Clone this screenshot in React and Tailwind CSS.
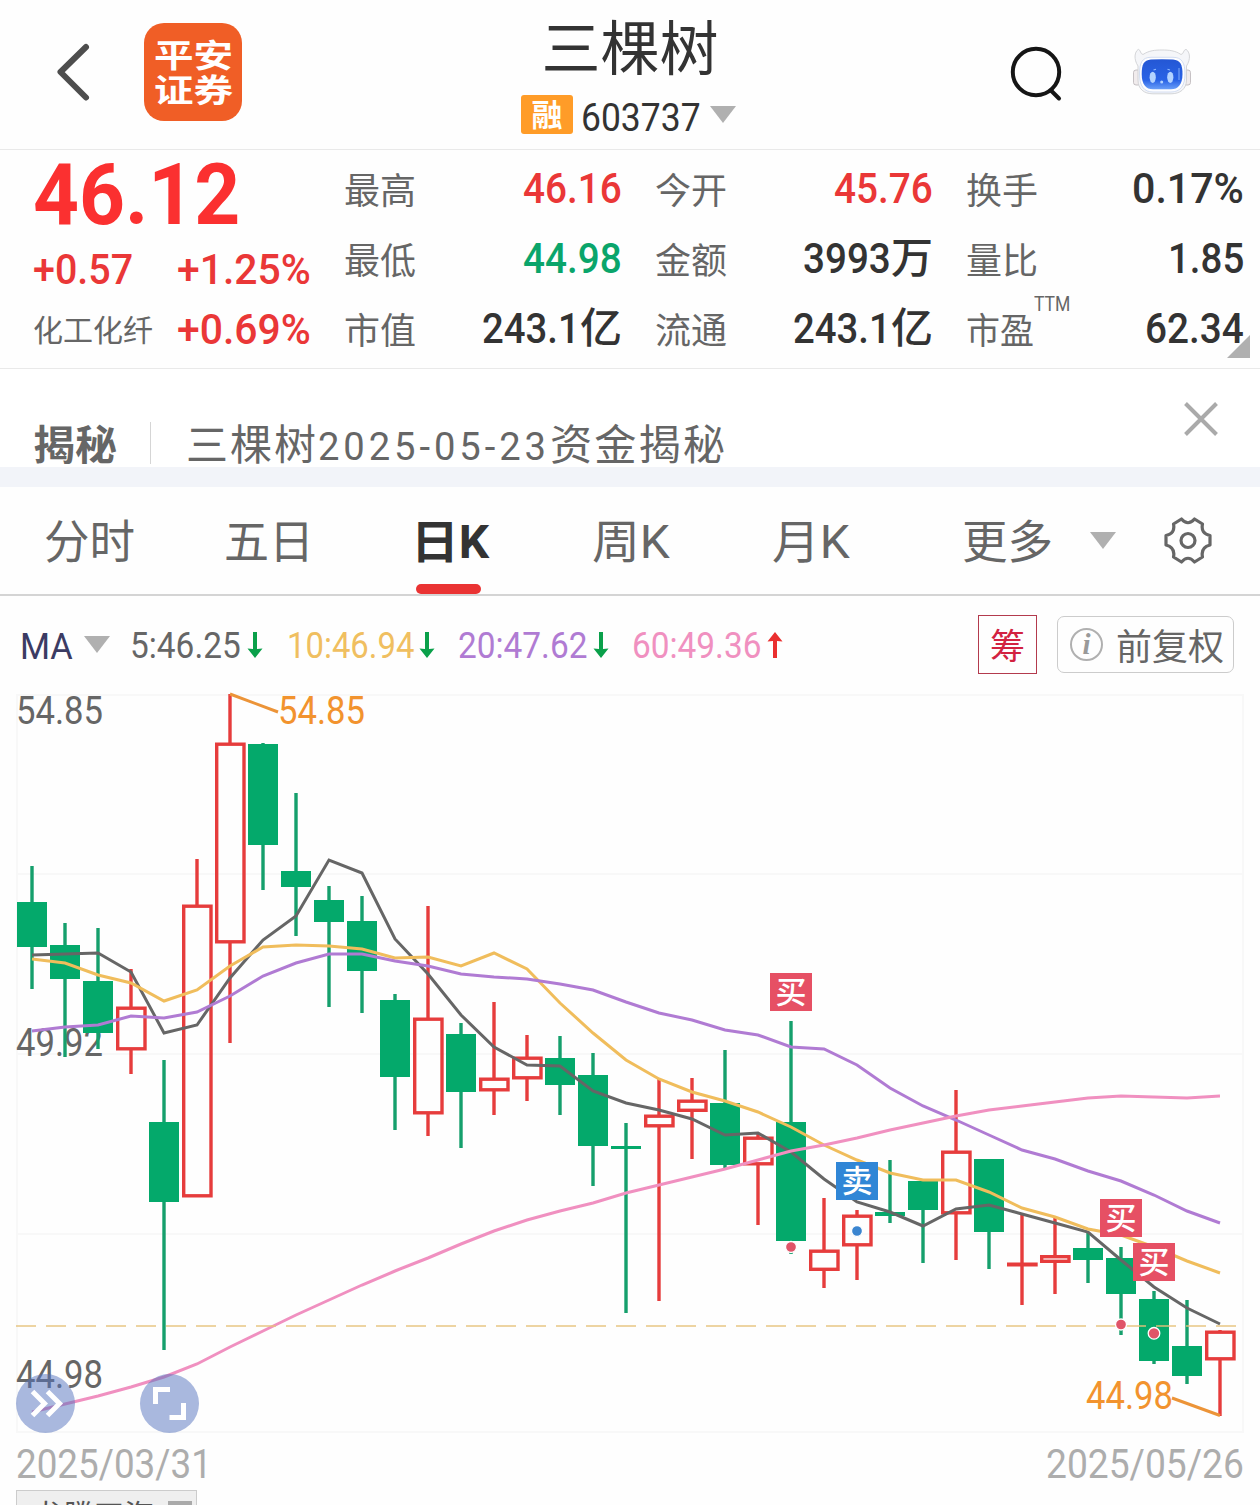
import { useLayoutEffect, useRef, useState } from "react";

const quotes = [
  [
    { label: "最高", value: "46.16", w: 99, color: "text-[#ea3737]" },
    { label: "最低", value: "44.98", w: 99, color: "text-[#0aa56b]" },
    { label: "市值", value: "243.1", unit: "亿", w: 98, color: "text-[#333]" },
  ],
  [
    { label: "今开", value: "45.76", w: 99, color: "text-[#ea3737]" },
    { label: "金额", value: "3993", unit: "万", w: 88, color: "text-[#333]" },
    { label: "流通", value: "243.1", unit: "亿", w: 98, color: "text-[#333]" },
  ],
  [
    { label: "换手", value: "0.17%", w: 112, color: "text-[#333]" },
    { label: "量比", value: "1.85", w: 76, color: "text-[#333]" },
    { label: "市盈", sup: "TTM", value: "62.34", w: 99, color: "text-[#333]" },
  ],
];

// [type, high, body top, body bottom, low]
const candles = [
  ["d", 866, 902, 947, 989],
  ["d", 923, 945, 979, 1057],
  ["d", 928, 981, 1033, 1049],
  ["u", 969, 1006.5, 1050.5, 1074],
  ["d", 1060, 1122, 1202, 1350],
  ["u", 859, 904.5, 1197.5, 1197],
  ["u", 694, 742.5, 943.5, 1043],
  ["d", 743, 744, 845, 890],
  ["d", 793, 871, 887, 936],
  ["d", 886, 900, 922, 1007],
  ["d", 896, 921, 971, 1013],
  ["d", 994, 1000, 1077, 1130],
  ["u", 906, 1017.5, 1114.5, 1136],
  ["d", 1023, 1034, 1092, 1148],
  ["u", 1002, 1077.5, 1091.5, 1115],
  ["u", 1035, 1056.5, 1079.5, 1101],
  ["d", 1036, 1058, 1085, 1115],
  ["d", 1053, 1075, 1146, 1186],
  ["d", 1123, 1146, 1149, 1313],
  ["u", 1079, 1114.5, 1127.5, 1301],
  ["u", 1078, 1099.5, 1112, 1159],
  ["d", 1050, 1103, 1165, 1169],
  ["u", 1134, 1136.5, 1165.5, 1225],
  ["d", 1021, 1122, 1241, 1254],
  ["u", 1198, 1249.5, 1271, 1288],
  ["u", 1210, 1214.5, 1246.5, 1280],
  ["d", 1160, 1212, 1216, 1223],
  ["d", 1181, 1181, 1210, 1263],
  ["u", 1090, 1150.5, 1214.5, 1260],
  ["d", 1159, 1159, 1232, 1269],
  ["u", 1214, 1262.5, 1266.5, 1305],
  ["u", 1218, 1255, 1263, 1294],
  ["d", 1233, 1248, 1260, 1283],
  ["d", 1247, 1258, 1294, 1335],
  ["d", 1291, 1299, 1361, 1364],
  ["d", 1300, 1346, 1376, 1384],
  ["u", 1330, 1330.5, 1360.5, 1416],
];

const ma5 = [955, 954, 953, 972, 1033, 1025, 978, 940, 916, 860, 873, 939, 974, 1015, 1047, 1065, 1066, 1091, 1103, 1110, 1119, 1135, 1133, 1152, 1179, 1202, 1212, 1226, 1209, 1205, 1214, 1223, 1232, 1260, 1287, 1308, 1324];
const ma10 = [959, 963, 975, 983, 1001, 990, 966, 947, 945, 946, 949, 958, 957, 966, 953, 969, 1003, 1033, 1060, 1079, 1092, 1101, 1112, 1127, 1145, 1160, 1173, 1180, 1180, 1192, 1208, 1217, 1229, 1235, 1247, 1261, 1273];
const ma20 = [1031, 1027, 1025, 1016, 1018, 1012, 996, 976, 963, 954, 954, 961, 966, 974, 977, 979, 984, 990, 1002, 1013, 1020, 1030, 1035, 1047, 1049, 1065, 1088, 1106, 1120, 1135, 1150, 1159, 1171, 1181, 1195, 1211, 1223];
const ma60 = [1412, 1404, 1396, 1387, 1377, 1364, 1347, 1331, 1315, 1300, 1285, 1271, 1258, 1244, 1231, 1220, 1211, 1203, 1193, 1185, 1177, 1169, 1160, 1151, 1145, 1138, 1130, 1123, 1116, 1110, 1106, 1102, 1098, 1096, 1097, 1098, 1096];

const cx = (i) => 32 + i * 33;
const toPoints = (ys) => ys.map((y, i) => `${cx(i)},${y}`).join(" ");

// Squeezes a run of text horizontally so that it takes exactly `w` pixels
function Fit({ w, className = "", children }) {
  const ref = useRef(null);
  const [scale, setScale] = useState(1);

  useLayoutEffect(() => {
    setScale(w / ref.current.offsetWidth);
  }, [w, children]);

  return (
    <span className={`inline-block shrink-0 whitespace-nowrap ${className}`} style={{ width: w }}>
      <span ref={ref} className="inline-block origin-left" style={{ transform: `scaleX(${scale})` }}>
        {children}
      </span>
    </span>
  );
}

function Caret({ className = "" }) {
  return (
    <svg width="26" height="17" viewBox="0 0 26 17" className={`shrink-0 ${className}`}>
      <path d="M0 0H26L13 17Z" fill="#b0b0b0" />
    </svg>
  );
}

function Arrow({ up }) {
  return (
    <svg width="16" height="28" viewBox="0 0 16 28" className={`shrink-0 ${up ? "rotate-180" : ""}`}>
      <path d="M6 1H10V18L15.500 17.500L8 27L0.500 17.500L6 18Z" fill={up ? "#ea2f2f" : "#0aa04a"} />
    </svg>
  );
}

function Header() {
  return (
    <header className="flex h-[150px] shrink-0 border-b border-[#e9e9e9]">
      <div className="flex w-[521px] shrink-0 pl-[54px] pt-[23px]">
        <svg width="38" height="98" viewBox="0 0 38 98" fill="none" stroke="#4d4d4d" strokeWidth="6" strokeLinecap="round" strokeLinejoin="round">
          <path d="M32 24L6.500 49L32 74.500" />
        </svg>
        <div className="ml-[52px] flex size-[98px] flex-col items-center justify-center rounded-[20px] bg-[#f05e26] pt-[3px] text-[32px] font-bold leading-[35px] text-white">
          <Fit w={79} className="h-[35px]">平安</Fit>
          <Fit w={79} className="h-[35px]">证券</Fit>
        </div>
      </div>
      <div className="flex w-[218px] shrink-0 flex-col items-center">
        <h1 className="mt-[12px] h-[74px] text-[59px] leading-[76px] text-[#333]">三棵树</h1>
        <div className="mt-[9px] flex h-[39px] w-full">
          <span className="h-[39px] w-[52px] rounded-[3px] bg-[#ff9c28] text-center text-[31px] font-bold leading-[41px] text-white">融</span>
          <Fit w={120} className="ml-2 text-[39px] leading-[46px] text-[#333]">603737</Fit>
          <Caret className="ml-[9px] mt-[11px]" />
        </div>
      </div>
      <div className="flex pl-[269px] pt-[44px]">
        <svg width="58" height="60" viewBox="0 0 58 60" fill="none" stroke="#151515" strokeWidth="4" strokeLinecap="round">
          <circle cx="28" cy="28" r="23.200" />
          <path d="M43.500 47L51 54.500" />
        </svg>
        <svg width="60" height="52" viewBox="0 0 60 52" className="ml-[67px]">
          <defs>
            <linearGradient id="face" x1="0" y1="0" x2="0" y2="1">
              <stop offset="0" stopColor="#2457d4" />
              <stop offset="0.700" stopColor="#2a63e6" />
              <stop offset="1" stopColor="#6b9ff8" />
            </linearGradient>
          </defs>
          <rect x="0.500" y="26" width="7" height="15" rx="2.500" fill="#f1eced" stroke="#b9b4b8" strokeWidth="0.800" />
          <rect x="50.500" y="26" width="7" height="15" rx="2.500" fill="#f1eced" stroke="#b9b4b8" strokeWidth="0.800" />
          <path d="M5.300 5.300C8 6 7 10 10 10.500C16 6.500 22 6 29 6C36 6 42 6.500 48 10.500C51 10 50 6 53 5.300C57 8 58 15 53.500 22V36C53.500 45 47 49.800 38 49.800H20C11 49.800 5 45 5 36V22C0.500 15 1.500 8 5.300 5.300Z" fill="#f5f6f9" stroke="#cfd0d4" strokeWidth="0.900" />
          <path d="M18 13.300H40C49 13.300 52 19 52 30C52 42 47 48 38 48H20C11 48 6.500 42 6.500 30C6.500 19 9 13.300 18 13.300Z" fill="#fdfdff" stroke="#c9d5ee" strokeWidth="0.800" />
          <path d="M18 15.500Q29 14.800 40 15.500C47.500 16 49.500 21 49.500 30C49.500 40.500 45 45.300 38 45.300H20C13 45.300 8.700 40.500 8.700 30C8.700 21 10.500 16 18 15.500Z" fill="url(#face)" />
          <ellipse cx="19.700" cy="33.300" rx="3.100" ry="5.600" fill="#b4d3ff" />
          <ellipse cx="37.300" cy="33.300" rx="3.100" ry="5.600" fill="#b4d3ff" />
          <path d="M20.500 26L23 25.200M34.500 25.200L37 26" stroke="#8db8ff" strokeWidth="1.200" />
          <circle cx="28.700" cy="38" r="1.500" fill="#b4d3ff" />
          <path d="M46 24V36" stroke="#83adf8" strokeWidth="1" />
        </svg>
      </div>
    </header>
  );
}

function Quote() {
  return (
    <section className="relative flex h-[219px] shrink-0 border-b border-[#e9e9e9]">
      <div className="w-[344px] shrink-0 pl-[33px] text-[43px] font-medium text-[#ea3737]">
        <div className="h-[84px] text-[86px] font-bold leading-[90px] text-[#fb3030]">
          <Fit w={207}>46.12</Fit>
        </div>
        <div className="flex h-[60px] leading-[70px]">
          <Fit w={100}>+0.57</Fit>
          <Fit w={134} className="ml-[44px]">+1.25%</Fit>
        </div>
        <div className="flex h-[60px] leading-[70px]">
          <Fit w={120} className="text-[30px] font-normal leading-[74px] text-[#666]">化工化纤</Fit>
          <Fit w={134} className="ml-[24px]">+0.69%</Fit>
        </div>
      </div>
      <div className="flex shrink-0 gap-[33px] pt-1">
        {quotes.map((col, i) => (
          <div key={i} className="w-[278px]">
            {col.map((q) => (
              <div key={q.label} className="flex h-[70px] justify-between leading-[69px]">
                <span className="flex text-[36px] leading-[77px] text-[#666]">
                  <Fit w={q.sup ? 68 : 72}>{q.label}</Fit>
                  {q.sup && <Fit w={36} className="text-[20px] leading-[21px]">{q.sup}</Fit>}
                </span>
                <span className={`flex text-[43px] font-medium ${q.color}`}>
                  <Fit w={q.w}>{q.value}</Fit>
                  {q.unit && <span className="text-[42px]">{q.unit}</span>}
                </span>
              </div>
            ))}
          </div>
        ))}
      </div>
      <svg width="23" height="23" viewBox="0 0 23 23" className="absolute bottom-[10px] right-[10px]">
        <path d="M23 0V23H0Z" fill="#b0b0b0" />
      </svg>
    </section>
  );
}

function Banner() {
  return (
    <section className="flex h-[98px] shrink-0 bg-white text-[#666]">
      <div className="flex h-[98px] w-[1184px] pl-[33px] pt-[57px] leading-[40px]">
        <Fit w={84} className="text-[41px] font-bold">揭秘</Fit>
        <div className="-mt-[4px] ml-[33px] h-[42px] w-px bg-[#d5d5d5]" />
        <span className="ml-[35px] flex">
          <Fit w={132} className="text-[42px] tracking-[2px]">三棵树</Fit>
          <Fit w={232} className="mt-px text-[39px] tracking-[4px]">2025-05-23</Fit>
          <Fit w={177} className="text-[42px] tracking-[2px]">资金揭秘</Fit>
        </span>
      </div>
      <svg width="34" height="34" viewBox="0 0 34 34" className="mt-[33px]" stroke="#aaa" strokeWidth="4">
        <path d="M1.500 1.500L32.500 32.500M32.500 1.500L1.500 32.500" />
      </svg>
    </section>
  );
}

function Tabs() {
  return (
    <nav className="flex h-[109px] shrink-0 border-b-2 border-[#d4d4d4] pl-[44px] text-[46px] leading-[110px] text-[#666]">
      <Fit w={91} className="mr-[89px]">分时</Fit>
      <Fit w={90} className="mr-[97px]">五日</Fit>
      <div className="relative mr-[103px] h-[107px] w-[78px] font-bold text-[#333]">
        <Fit w={78}>日K</Fit>
        <div className="absolute bottom-0 left-[5px] h-[10px] w-[65px] rounded-full bg-[#ea3333]" />
      </div>
      <Fit w={78} className="mr-[102px]">周K</Fit>
      <Fit w={78} className="mr-[112px]">月K</Fit>
      <Fit w={91}>更多</Fit>
      <Caret className="ml-[37px] mt-[45px]" />
      <svg width="48" height="48" viewBox="0 0 48 48" className="ml-[48px] mt-[29px]" fill="none" stroke="#666" strokeWidth="3.200" strokeLinejoin="round">
        <path d="M17.500 3Q24 10.500 30.500 3L38.500 8Q36.500 17.500 46 19.500V29Q36.500 31.500 38.500 41L30.500 46Q24 38.500 17.500 46L9.500 41Q11.500 31.500 2 29V19.500Q11.500 17.500 9.500 8Z" />
        <circle cx="24" cy="24.500" r="7" />
      </svg>
    </nav>
  );
}

function Indicators() {
  return (
    <div className="flex h-[98px] shrink-0 pl-[20px] text-[37px] leading-[101px]">
      <Fit w={53} className="text-[#3b3b63]">MA</Fit>
      <Caret className="ml-[11px] mt-[40px]" />
      <div className="ml-[20px] flex items-center text-[#666]">
        <Fit w={111}>5:46.25</Fit>
        <span className="ml-[6px]"><Arrow /></span>
      </div>
      <div className="ml-[24px] flex items-center text-[#f0bf60]">
        <Fit w={127}>10:46.94</Fit>
        <span className="ml-[5px]"><Arrow /></span>
      </div>
      <div className="ml-[23px] flex items-center text-[#b07bd3]">
        <Fit w={129}>20:47.62</Fit>
        <span className="ml-[6px]"><Arrow /></span>
      </div>
      <div className="ml-[23px] flex items-center text-[#f090c0]">
        <Fit w={129}>60:49.36</Fit>
        <span className="ml-[6px]"><Arrow up /></span>
      </div>
      <div className="ml-auto mr-[26px] mt-[19px] flex gap-5">
        <div className="size-[59px] border border-[#b33a4d] text-center text-[35px] leading-[64px] text-[#d22240]">筹</div>
        <div className="mt-px flex h-[57px] w-[177px] items-center rounded-[7px] border border-[#ccc] pl-[12px] text-[36px] leading-[55px] text-[#666]">
          <span className="flex size-[33px] items-center justify-center rounded-full border-2 border-[#b0b0b0] font-['Liberation_Serif',serif] text-[29px] font-bold italic leading-none text-[#999]">i</span>
          <Fit w={108} className="ml-[13px] mt-[8px]">前复权</Fit>
        </div>
      </div>
    </div>
  );
}

function Badge({ x, y, sell }) {
  return (
    <g>
      <rect x={x} y={y} width="42" height="38" fill={sell ? "#3086d6" : "#e65064"} />
      <text x={x + 21} y={y + 30} fontSize="31" fontWeight="500" fill="#fff" textAnchor="middle">
        {sell ? "卖" : "买"}
      </text>
    </g>
  );
}

function Chart() {
  return (
    <svg width="1260" height="740" viewBox="0 694 1260 740" className="block shrink-0 overflow-visible">
      {/* grid */}
      <g stroke="#f8f8f8" strokeWidth="2">
        <path d="M16 695H1244M16 874H1244M16 1054H1244M16 1234H1244M16 1432H1244M17 694V1433M1243 694V1433" />
      </g>

      {/* price scale */}
      <g fontSize="38" fill="#666">
        <text x="16" y="723.500" textLength="87" lengthAdjust="spacingAndGlyphs">54.85</text>
        <text x="16" y="1055.500" textLength="87" lengthAdjust="spacingAndGlyphs">49.92</text>
        <text x="16" y="1387.500" textLength="87" lengthAdjust="spacingAndGlyphs">44.98</text>
      </g>

      {candles.map(([type, high, top, bottom, low], i) =>
        type === "d" ? (
          <g key={i} fill="#04a96b">
            <rect x={cx(i) - 1.7} y={high} width="3.400" height={low - high} fill="#159f6c" />
            <rect x={cx(i) - 15} y={top} width="30" height={bottom - top} />
          </g>
        ) : (
          <g key={i} stroke="#e63c3c" strokeWidth="3.400" fill="none">
            <path d={`M${cx(i)} ${high}V${top + 1}M${cx(i)} ${bottom - 1}V${Math.max(low, bottom - 1)}`} />
            <rect x={cx(i) - 13.300} y={top + 1.7} width="27.300" height={Math.max(bottom - top - 3.4, 0.5)} />
          </g>
        )
      )}

      {/* moving averages */}
      <g fill="none" strokeWidth="3">
        <polyline points={toPoints(ma5)} stroke="#666" />
        <polyline points={toPoints(ma10)} stroke="#f0bd5c" />
        <polyline points={toPoints(ma20)} stroke="#b07bd3" />
        <polyline points={toPoints(ma60)} stroke="#f090c0" />
      </g>
      <path d="M16 1326H1237" stroke="#e6c27a" strokeOpacity="0.700" strokeWidth="2" strokeDasharray="20 10" />

      {/* extremes */}
      <g fontSize="38" fill="#f2932e">
        <path d="M230 694L278 712M1172 1398L1220 1415.500" stroke="#ec9438" strokeWidth="3" />
        <text x="278" y="723.500" textLength="87" lengthAdjust="spacingAndGlyphs">54.85</text>
        <text x="1086" y="1408.500" textLength="87" lengthAdjust="spacingAndGlyphs">44.98</text>
      </g>

      {/* trades */}
      <g stroke="#fff" strokeWidth="1.300">
        <circle cx="791" cy="1247" r="5.500" fill="#e05468" />
        <circle cx="857" cy="1231" r="5.500" fill="#3a85d0" />
        <circle cx="1121" cy="1324.500" r="5.500" fill="#e05468" />
        <circle cx="1154" cy="1333.300" r="5.800" fill="#e05468" />
      </g>
      <Badge x={770} y={973} />
      <Badge x={836} y={1162} sell />
      <Badge x={1100} y={1199} />
      <Badge x={1133} y={1243} />

      {/* floating controls */}
      <g fill="#5472be" fillOpacity="0.500">
        <circle cx="45.500" cy="1403.500" r="29.500" />
        <circle cx="169.500" cy="1403.500" r="29.500" />
      </g>
      <g fill="none" stroke="#fff" strokeWidth="5">
        <path d="M32.500 1391.500L44.500 1403.500L32.500 1415.500M47.500 1391.500L59.500 1403.500L47.500 1415.500" />
        <path d="M155.500 1404V1389.500H170M169.500 1417.500H183.500V1403" />
      </g>
    </svg>
  );
}

export default function App() {
  return (
    <div className="flex h-[1505px] w-[1260px] flex-col overflow-hidden bg-[#fefefe] font-[Roboto,'Noto_Sans_CJK_SC',sans-serif]">
      <Header />
      <Quote />
      <Banner />
      <div className="h-5 shrink-0 bg-[#f2f4f9]" />
      <Tabs />
      <Indicators />
      <Chart />
      <div className="flex h-[56px] shrink-0 justify-between px-[16px] text-[40px] leading-[62px] text-[#adadad]">
        <Fit w={196}>2025/03/31</Fit>
        <Fit w={198}>2025/05/26</Fit>
      </div>
      <div className="ml-[16px] flex h-[50px] w-[181px] shrink-0 border border-[#ccc] bg-[#efefef] pl-[17px] pt-[7px] text-[30px] leading-[36px] text-[#555]">
        <Fit w={120}>龙腾四海</Fit>
        <div className="ml-[14px] mt-[3px] h-[20px] w-[24px] bg-[#aaa]" />
      </div>
    </div>
  );
}
